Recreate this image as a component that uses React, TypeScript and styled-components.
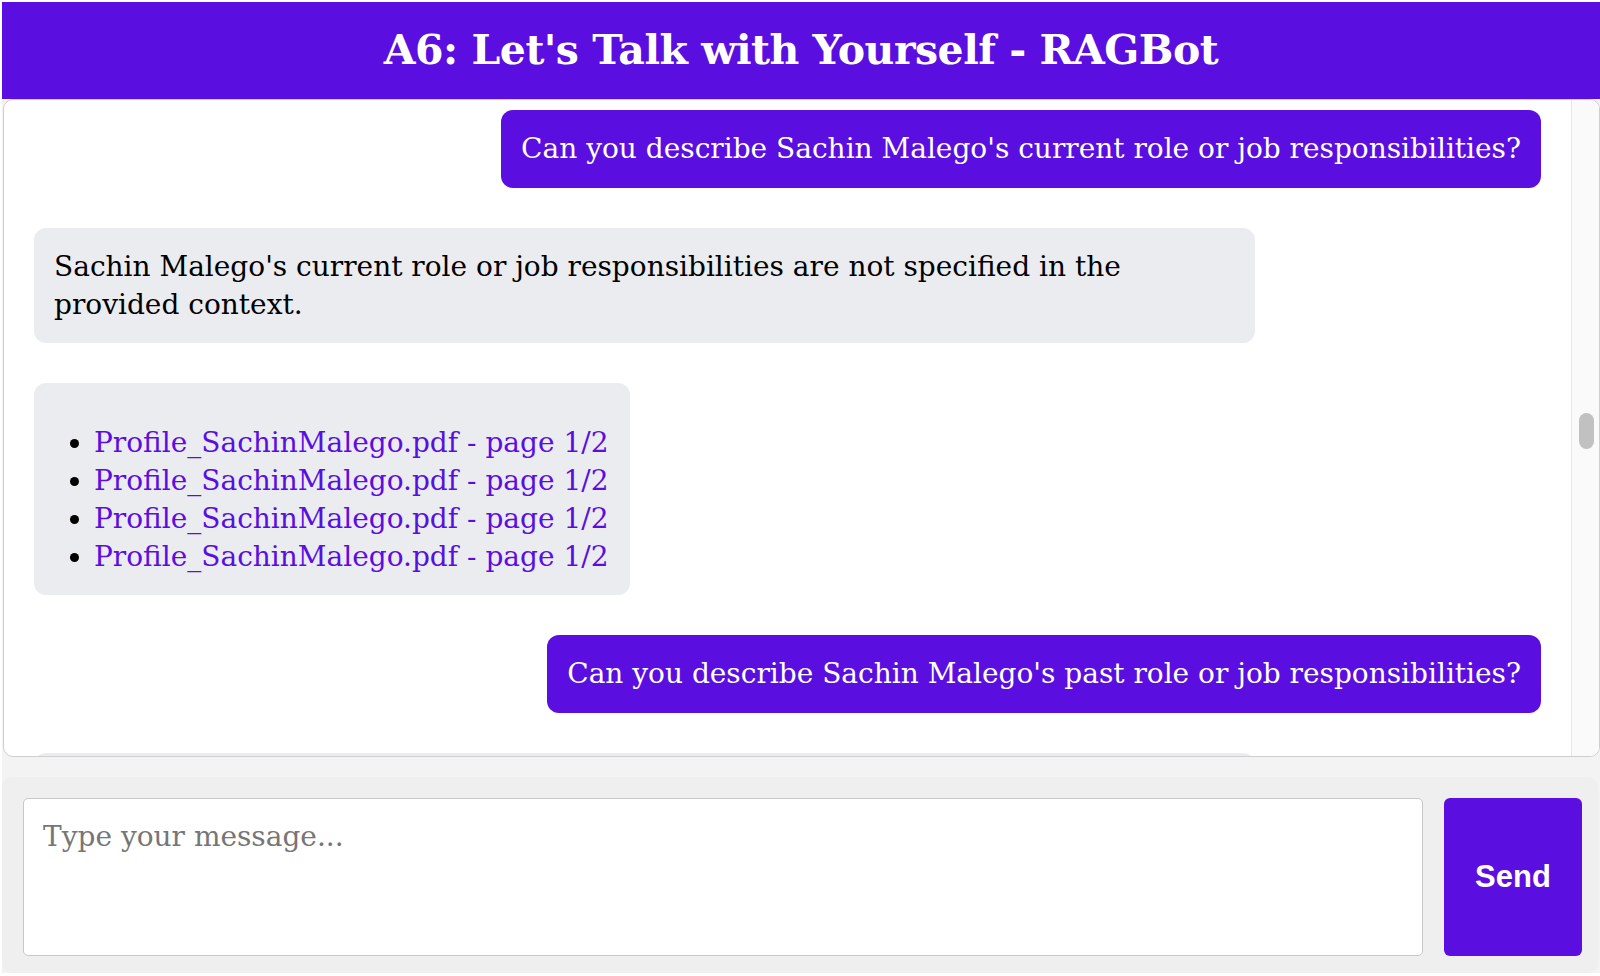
import React, { useCallback, useLayoutEffect, useRef, useState } from 'react';
import styled, { createGlobalStyle } from 'styled-components';

const PURPLE = '#5a0fe0';
const SERIF = `"DejaVu Serif", "Liberation Serif", serif`;

const GlobalStyle = createGlobalStyle`
  *, *::before, *::after { box-sizing: border-box; }
  html, body {
    margin: 0;
    padding: 0;
    height: 100%;
    overflow: hidden;
    background: #ffffff;
  }
  body { font-family: ${SERIF}; }
`;

const Page = styled.div`
  margin: 2px 0 0 2px;
  background: #f3f3f3;
  display: flex;
  flex-direction: column;
`;

const Header = styled.header`
  flex: none;
  height: 97px;
  background: ${PURPLE};
  display: flex;
  align-items: center;
  justify-content: center;
`;

const Title = styled.h1`
  margin: 0;
  color: #ffffff;
  font: bold 41px/1 ${SERIF};
  letter-spacing: -0.5px;
`;

const ChatWindow = styled.main`
  flex: none;
  height: 658px;
  margin-left: 1px;
  background: #ffffff;
  border: 1px solid #cfcfcf;
  border-radius: 10px;
  overflow: hidden;
  display: flex;
`;

const ChatScroll = styled.div`
  position: relative;
  flex: 1;
  min-width: 0;
  padding: 30px;
  overflow-y: auto;
  scrollbar-width: none;
  display: flex;
  flex-direction: column;
  gap: 40px;

  &::-webkit-scrollbar {
    display: none;
  }
`;

const ScrollTrack = styled.div`
  position: relative;
  flex: none;
  width: 28px;
  background: #fafafa;
  border-left: 1px solid #e6e6e6;
`;

const ScrollThumb = styled.div`
  position: absolute;
  left: 7px;
  width: 15px;
  border-radius: 7.5px;
  background: #c1c1c1;
`;

const Bubble = styled.div`
  flex: none;
  padding: 20px;
  border-radius: 12px;
  font: 28px/37.7px ${SERIF};
`;

const UserBubble = styled(Bubble)`
  align-self: flex-end;
  max-width: 81%;
  background: ${PURPLE};
  color: #ffffff;
`;

const BotBubble = styled(Bubble)`
  align-self: flex-start;
  max-width: 81%;
  background: #ebecf0;
  color: #000000;
`;

const SourcesBubble = styled(BotBubble)`
  padding: 20px 21px 20px 20px;
`;

const SourceList = styled.ul`
  margin: 21px 0 0;
  padding-left: 40px;
`;

const SourceItem = styled.li`
  color: #000000;
`;

const SourceLink = styled.a`
  color: ${PURPLE};
  text-decoration: none;
`;

const Composer = styled.form`
  flex: none;
  margin: 20px 2px 0 0;
  padding: 21px 16px 17px 21px;
  background: #efefef;
  border-radius: 10px;
  display: flex;
  gap: 21px;
`;

const MessageInput = styled.textarea`
  flex: 1;
  height: 158px;
  resize: none;
  padding: 19px 19px 16px;
  border: 1px solid #c8c8c8;
  border-radius: 5px;
  background: #ffffff;
  font: 28px/37.7px ${SERIF};
  color: #000000;
  outline: none;

  &::placeholder {
    color: #767676;
  }
`;

const SendButton = styled.button`
  flex: none;
  width: 138px;
  height: 158px;
  border: none;
  border-radius: 6px;
  background: ${PURPLE};
  color: #ffffff;
  font: bold 31px "Liberation Sans", Arial, sans-serif;
  cursor: pointer;
`;

type Exchange = { q: string; a: string; pages: string[] };

const P1 = ['1/2', '1/2', '1/2', '1/2'];
const P2 = ['1/2', '2/2', '1/2', '2/2'];

const history: Exchange[] = [
  { q: 'How old is Sachin Malego?', a: "Sachin Malego's age is not mentioned in the provided context.", pages: P1 },
  { q: "What is Sachin Malego's highest level of education?", a: "Sachin Malego's highest level of education is a Master's degree in Data Science and Artificial Intelligence from the Asian Institute of Technology.", pages: P1 },
  { q: 'What major or field of study did Sachin Malego pursue during his education?', a: "Sachin Malego pursued Computer Engineering for his bachelor's degree and is currently studying Data Science and Artificial Intelligence.", pages: P2 },
  { q: 'How many years of work experience does Sachin Malego have?', a: 'According to the provided context, Sachin Malego has around three years of professional work experience in software development.', pages: P1 },
  { q: 'What type of work or industry has Sachin Malego been involved in?', a: 'Sachin Malego has been involved in the software industry, working on web applications, data pipelines and machine learning projects.', pages: P2 },
  { q: "Can you describe Sachin Malego's core beliefs regarding technology?", a: 'Sachin Malego believes that technology should be used to solve real problems and to make everyday life easier for people.', pages: P1 },
  { q: "What are Sachin Malego's research interests?", a: "Sachin Malego's research interests include natural language processing, large language models and retrieval-augmented generation.", pages: P1 },
  { q: 'Where is Sachin Malego from?', a: 'Sachin Malego is from Kathmandu, Nepal.', pages: P1 },
  { q: 'What programming languages does Sachin Malego know?', a: 'Sachin Malego knows Python, JavaScript, TypeScript and SQL.', pages: P2 },
  { q: "What are Sachin Malego's hobbies?", a: "Sachin Malego's hobbies are not specified in the provided context.", pages: P1 },
  { q: 'Which university is Sachin Malego currently attending?', a: 'Sachin Malego is currently attending the Asian Institute of Technology (AIT) in Pathum Thani, Thailand, as a graduate student.', pages: P1 },
];

const current: Exchange = {
  q: "Can you describe Sachin Malego's current role or job responsibilities?",
  a: "Sachin Malego's current role or job responsibilities are not specified in the provided context.",
  pages: P1,
};

const later: Exchange[] = [
  { q: "Can you describe Sachin Malego's past role or job responsibilities?", a: 'Sachin Malego previously worked as a software engineer, where he was responsible for developing and maintaining web applications and backend services.', pages: P2 },
  { q: 'What challenges has Sachin Malego faced in his career?', a: 'The provided context does not describe specific challenges that Sachin Malego has faced in his career.', pages: P1 },
  { q: 'What projects has Sachin Malego worked on?', a: 'Sachin Malego has worked on a retrieval-augmented chatbot, a machine translation system and several web applications.', pages: P2 },
  { q: "What are Sachin Malego's strengths?", a: "Sachin Malego's strengths include problem solving, quick learning, clear communication and teamwork.", pages: P1 },
  { q: "What are Sachin Malego's career goals?", a: 'Sachin Malego aims to become a machine learning engineer and to build AI systems that are useful for people in Nepal.', pages: P1 },
  { q: 'Which frameworks has Sachin Malego used?', a: 'Sachin Malego has used React, Flask, Django, PyTorch and LangChain.', pages: P2 },
  { q: 'What languages does Sachin Malego speak?', a: 'Sachin Malego speaks Nepali and English.', pages: P1 },
  { q: 'Has Sachin Malego published any papers?', a: 'The provided context does not mention any publications by Sachin Malego.', pages: P1 },
  { q: 'What does Sachin Malego do in his free time?', a: 'This information is not available in the provided context.', pages: P1 },
  { q: 'Does Sachin Malego have any certifications?', a: 'The provided context does not mention any certifications or professional licenses held by Sachin Malego.', pages: P1 },
  { q: 'How can I contact Sachin Malego?', a: 'Sachin Malego can be contacted through the email address and LinkedIn profile listed in his profile document.', pages: P2 },
];

function ExchangeView({ item, anchorRef }: { item: Exchange; anchorRef?: React.Ref<HTMLDivElement> }) {
  return (
    <>
      <UserBubble ref={anchorRef}>{item.q}</UserBubble>
      <BotBubble>{item.a}</BotBubble>
      <SourcesBubble>
        <SourceList>
          {item.pages.map((p, i) => (
            <SourceItem key={i}>
              <SourceLink href="#">Profile_SachinMalego.pdf - page {p}</SourceLink>
            </SourceItem>
          ))}
        </SourceList>
      </SourcesBubble>
    </>
  );
}

export default function App() {
  const scrollRef = useRef<HTMLDivElement>(null);
  const anchorRef = useRef<HTMLDivElement>(null);
  const [thumb, setThumb] = useState({ top: 0, height: 0 });

  const updateThumb = useCallback(() => {
    const s = scrollRef.current;
    if (!s) return;
    const track = s.clientHeight;
    const height = Math.max(20, (track * s.clientHeight) / s.scrollHeight);
    const range = s.scrollHeight - s.clientHeight;
    const top = range > 0 ? ((track - height) * s.scrollTop) / range : 0;
    setThumb({ top, height });
  }, []);

  useLayoutEffect(() => {
    const s = scrollRef.current;
    const a = anchorRef.current;
    if (s && a) s.scrollTop = a.offsetTop - 10;
    updateThumb();
  }, [updateThumb]);

  return (
    <>
      <GlobalStyle />
      <Page>
        <Header>
          <Title>A6: Let's Talk with Yourself - RAGBot</Title>
        </Header>
        <ChatWindow>
          <ChatScroll ref={scrollRef} onScroll={updateThumb}>
            {history.map((h, i) => (
              <ExchangeView key={`h${i}`} item={h} />
            ))}
            <ExchangeView item={current} anchorRef={anchorRef} />
            {later.map((h, i) => (
              <ExchangeView key={`l${i}`} item={h} />
            ))}
          </ChatScroll>
          <ScrollTrack>
            <ScrollThumb style={{ top: thumb.top, height: thumb.height }} />
          </ScrollTrack>
        </ChatWindow>
        <Composer onSubmit={(e) => e.preventDefault()}>
          <MessageInput placeholder="Type your message..." />
          <SendButton type="submit">Send</SendButton>
        </Composer>
      </Page>
    </>
  );
}
